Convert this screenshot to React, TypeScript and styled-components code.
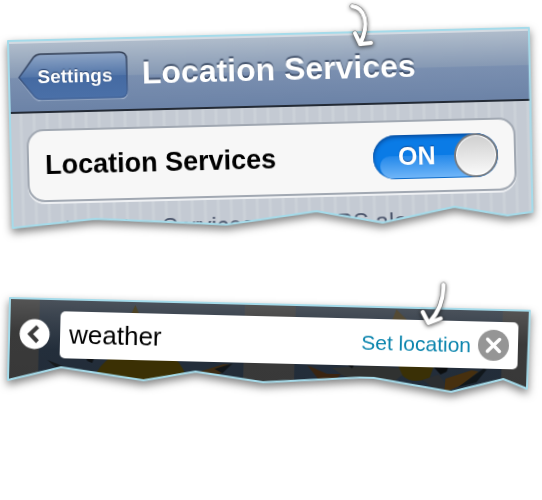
import React, { useState } from "react";
import styled, { createGlobalStyle } from "styled-components";

const GlobalStyle = createGlobalStyle`
  *, *::before, *::after { box-sizing: border-box; }
  body {
    margin: 0;
    background: #fff;
    font-family: "Liberation Sans", Arial, Helvetica, sans-serif;
  }
  button, input { font-family: inherit; }
`;

type Point = [number, number];

const SHEET_WIDTH = 522;

const settingsEdge: Point[] = [
  [0, 0], [521, 0], [520, 184], [495, 187], [442, 177], [370, 191],
  [304, 178], [214, 189], [83, 180], [0, 187],
];

const searchEdge: Point[] = [
  [0, 0], [522, 0], [521, 78], [497, 69], [445, 83], [367, 71], [353, 71],
  [256, 78], [188, 69], [136, 79], [53, 68], [0, 82],
];

const toPolygon = (points: Point[]) =>
  `polygon(${points.map(([x, y]) => `${(x / SHEET_WIDTH) * 100}% ${y}px`).join(", ")})`;

const Page = styled.main`
  display: flex;
  flex-direction: column;
  gap: 65px;
  min-height: 100vh;
  padding: 41px 12px 0 8px;
`;

const Snippet = styled.section<{ $angle: number; $inset: number }>`
  position: relative;
  margin-left: ${(p) => p.$inset}px;
  transform: rotate(${(p) => p.$angle}deg);
  transform-origin: 0 0;
`;

const Shadow = styled.div`
  position: relative;
  filter: drop-shadow(0 4px 4px rgba(0, 0, 0, 0.5));
`;

const Sheet = styled.div<{ $edge: Point[] }>`
  clip-path: ${(p) => toPolygon(p.$edge)};
`;

const EdgeSvg = styled.svg`
  position: absolute;
  inset: 0;
  width: 100%;
  height: 100%;
  overflow: visible;
  pointer-events: none;
`;

const ArrowSvg = styled.svg<{ $left: number }>`
  position: absolute;
  top: -30px;
  left: ${(p) => p.$left}%;
  overflow: visible;
  pointer-events: none;
  filter: drop-shadow(0 1px 2px rgba(0, 0, 0, 0.6));
`;

const SettingsScreen = styled.div`
  height: 192px;
  background: repeating-linear-gradient(
    90deg,
    #c4cad3 0 9px,
    #cbd1d8 10px 12px,
    #c4cad3 13px
  );
`;

const NavBar = styled.header`
  display: flex;
  align-items: center;
  gap: 14px;
  height: 73px;
  padding: 3px 9px 0;
  border-bottom: 2px solid #232a35;
  background: linear-gradient(#b3bfcd 0, #8699b4 52%, #7a8fb0 53%, #6c83a7 100%);
  box-shadow: inset 0 3px 0 #d3dae2;
`;

const BackButton = styled.button`
  position: relative;
  width: 110px;
  height: 48px;
  padding: 0 0 0 4px;
  border: 0;
  background: none;
  color: #fff;
  font-size: 19px;
  line-height: 48px;
  font-weight: 700;
  text-align: center;
  text-shadow: 0 -1px 1px #27406b;
  cursor: pointer;

  svg {
    position: absolute;
    inset: 0;
  }

  span {
    position: relative;
  }
`;

const Title = styled.h1`
  margin: 0;
  padding-bottom: 4px;
  color: #fff;
  font-size: 32px;
  line-height: 40px;
  font-weight: 700;
  white-space: nowrap;
  text-shadow: 0 -2px 1px rgba(45, 60, 85, 0.75);
`;

const SettingRow = styled.label`
  display: flex;
  align-items: center;
  justify-content: space-between;
  height: 73px;
  margin: 16px 17px 16px 16px;
  padding: 0 16px;
  border: 2px solid #a1a8b2;
  border-radius: 17px;
  background: #f7f7f7;
  box-shadow: 0 2px 0 #eef0f3;
  color: #000;
  font-size: 27px;
  font-weight: 700;
  white-space: nowrap;
  cursor: pointer;
`;

const Toggle = styled.span`
  position: relative;
  display: flex;
  align-items: center;
  justify-content: space-between;
  width: 125px;
  height: 44px;
  padding-left: 25px;
  border-radius: 22px;
  overflow: hidden;
  background: #0a7be6;
  box-shadow: inset 0 2px 4px #064a9c, inset 0 0 2px #2d5f9c;
  color: #fff;
  font-size: 25px;
  text-shadow: 0 -1px 1px #0b4c9b;

  &::before {
    content: "";
    position: absolute;
    left: 7px;
    right: 7px;
    top: 21px;
    bottom: 1px;
    border-radius: 14px 14px 18px 18px;
    background: linear-gradient(#2388ea, #6fb5f8);
  }

  span {
    position: relative;
  }
`;

const ToggleInput = styled.input`
  position: absolute;
  inset: 0;
  width: 100%;
  height: 100%;
  margin: 0;
  opacity: 0;
`;

const Knob = styled.i`
  position: relative;
  width: 44px;
  height: 44px;
  border: 2px solid #777b80;
  border-radius: 50%;
  background: linear-gradient(#cfcfcf, #fafafa);
  box-shadow: inset 0 0 0 1px #fff;
`;

const Hint = styled.p`
  margin: 0;
  padding-left: 52px;
  color: #4c566c;
  font-size: 24px;
  line-height: 24px;
  white-space: nowrap;
`;

const SearchScreen = styled.div`
  position: relative;
  height: 84px;
  background: #3a3a3a;
`;

const Backdrop = styled.svg`
  position: absolute;
  inset: 0;
  width: 100%;
  height: 100%;
`;

const SearchBar = styled.form`
  position: relative;
  display: flex;
  align-items: center;
  gap: 10px;
  padding: 12px 11px 0 10px;
`;

const RoundButton = styled.button`
  display: flex;
  flex: none;
  width: 31px;
  height: 31px;
  padding: 0;
  border: 0;
  border-radius: 50%;
  background: none;
  cursor: pointer;
`;

const SearchField = styled.div`
  display: flex;
  flex: 1;
  align-items: center;
  gap: 7px;
  min-width: 0;
  height: 47px;
  padding: 0 9px;
  border-radius: 5px;
  background: #fff;
`;

const SearchInput = styled.input`
  flex: 1;
  min-width: 0;
  height: 40px;
  padding: 0;
  border: 0;
  outline: 0;
  background: none;
  color: #000;
  font-size: 26px;
`;

const SetLocation = styled.button`
  padding: 0;
  border: 0;
  background: none;
  color: #0a84ad;
  font-size: 21px;
  line-height: 40px;
  white-space: nowrap;
  cursor: pointer;
`;

function TornEdge({ points, height }: { points: Point[]; height: number }) {
  return (
    <EdgeSvg viewBox={`0 0 ${SHEET_WIDTH} ${height}`} preserveAspectRatio="none" aria-hidden="true">
      <polygon
        points={points.map((p) => p.join(",")).join(" ")}
        fill="none"
        stroke="#a5dbea"
        strokeWidth="2"
        strokeLinejoin="round"
        vectorEffect="non-scaling-stroke"
      />
    </EdgeSvg>
  );
}

function Arrow({ left, shaft, head }: { left: number; shaft: string; head: string }) {
  return (
    <ArrowSvg $left={left} width="28" height="48" viewBox="0 0 28 48" aria-hidden="true">
      <g fill="none" stroke="#6d6d6d" strokeWidth="5" strokeLinecap="round" strokeLinejoin="round">
        <path d={shaft} />
        <path d={head} />
      </g>
      <g fill="none" stroke="#fff" strokeWidth="4" strokeLinecap="round" strokeLinejoin="round">
        <path d={shaft} />
        <path d={head} />
      </g>
    </ArrowSvg>
  );
}

function SearchBackdrop() {
  return (
    <Backdrop viewBox="0 0 522 84" preserveAspectRatio="none" aria-hidden="true">
      <defs>
        <linearGradient id="tile" x1="0" y1="0" x2="0" y2="1">
          <stop offset="0" stopColor="#4b525b" />
          <stop offset="0.2" stopColor="#3b444f" />
          <stop offset="0.6" stopColor="#232e3b" />
          <stop offset="1" stopColor="#222c38" />
        </linearGradient>
        <linearGradient id="gutter" x1="0" y1="0" x2="0" y2="1">
          <stop offset="0" stopColor="#555" />
          <stop offset="0.4" stopColor="#3a3a3a" />
          <stop offset="1" stopColor="#383838" />
        </linearGradient>
      </defs>
      <rect width="522" height="84" fill="url(#gutter)" />
      <rect x="30" width="206" height="84" fill="url(#tile)" />
      <rect x="287" width="208" height="84" fill="url(#tile)" />
      <path d="M126 4l4 9h-8z" fill="#4e4426" />
      <path d="M388 2l12 11h-16z" fill="#544a34" />
      <path d="M84 84q6-20 20-28h62q12 9 15 28z" fill="#3b3004" />
      <path d="M39 61l24 9-12 1z" fill="#171a1c" />
      <path d="M78 58l8 0-2 5-5-2z" fill="#101316" />
      <path d="M192 69l24-8 8 0-12 10-14 3z" fill="#3e2c14" />
      <path d="M207 66l18-6-10 10z" fill="#11161a" />
      <path d="M300 60l20 8 14 0-7 8-16-3z" fill="#3a2511" />
      <path d="M325 62l40-3 38 2-14 12-30 2-22-5z" fill="#303231" />
      <path d="M338 57h10l-3 5z" fill="#0c1013" />
      <path d="M391 58h36l-4 12q-18 7-27-2z" fill="#3a3006" />
      <path d="M425 57h17l-2 6-6 3z" fill="#0b0e10" />
      <path d="M416 72l16-6 14 18h-12z" fill="#2b2e31" />
      <path d="M438 84l1-14 26-9 7 1-15 13z" fill="#47300f" />
      <path d="M452 78l25-19 3 1-10 13z" fill="#11171b" />
    </Backdrop>
  );
}

export default function App() {
  const [enabled, setEnabled] = useState(true);
  const [query, setQuery] = useState("weather");

  return (
    <>
      <GlobalStyle />
      <Page>
        <Snippet $angle={-1.45} $inset={0}>
          <Shadow>
            <Sheet $edge={settingsEdge}>
              <SettingsScreen>
                <NavBar>
                  <BackButton type="button">
                    <svg width="110" height="48" viewBox="0 0 110 48" aria-hidden="true">
                      <defs>
                        <linearGradient id="back" x1="0" y1="0" x2="0" y2="1">
                          <stop offset="0" stopColor="#8ea5c6" />
                          <stop offset="0.5" stopColor="#5376a9" />
                          <stop offset="0.52" stopColor="#456aa2" />
                          <stop offset="1" stopColor="#4a70a8" />
                        </linearGradient>
                        <linearGradient id="backLine" x1="0" y1="0" x2="0" y2="1">
                          <stop offset="0" stopColor="#303c52" />
                          <stop offset="0.6" stopColor="#3c5580" />
                          <stop offset="1" stopColor="#45679c" />
                        </linearGradient>
                      </defs>
                      <path
                        d="M1 25L16 5q3-3 7-3h79q7 0 7 7v32q0 7-7 7H23q-4 0-7-3z"
                        fill="none"
                        stroke="#a9b9d1"
                        strokeWidth="1"
                      />
                      <path
                        d="M1 24L16 4q3-3 7-3h79q7 0 7 7v31q0 7-7 7H23q-4 0-7-3z"
                        fill="url(#back)"
                        stroke="url(#backLine)"
                        strokeWidth="1.5"
                      />
                    </svg>
                    <span>Settings</span>
                  </BackButton>
                  <Title>Location Services</Title>
                </NavBar>
                <SettingRow>
                  Location Services
                  <Toggle>
                    <ToggleInput
                      type="checkbox"
                      role="switch"
                      checked={enabled}
                      onChange={(e) => setEnabled(e.target.checked)}
                    />
                    <span>{enabled ? "ON" : "OFF"}</span>
                    <Knob />
                  </Toggle>
                </SettingRow>
                <Hint>Location Services uses GPS along</Hint>
              </SettingsScreen>
            </Sheet>
            <TornEdge points={settingsEdge} height={192} />
          </Shadow>
          <Arrow left={65.3} shaft="M4 4C17 6 21 22 11 42" head="M6 31L11 42L22 41" />
        </Snippet>

        <Snippet $angle={1.4} $inset={2}>
          <Shadow>
            <Sheet $edge={searchEdge}>
              <SearchScreen>
                <SearchBackdrop />
                <SearchBar onSubmit={(e) => e.preventDefault()}>
                  <RoundButton type="button" aria-label="Back">
                    <svg width="31" height="31" viewBox="0 0 31 31" aria-hidden="true">
                      <circle cx="15.5" cy="15.5" r="15" fill="#fff" />
                      <path d="M18.5 8L11 15.5L18.5 23" fill="none" stroke="#3b3b3b" strokeWidth="4" />
                    </svg>
                  </RoundButton>
                  <SearchField>
                    <SearchInput
                      aria-label="Search"
                      value={query}
                      onChange={(e) => setQuery(e.target.value)}
                    />
                    <SetLocation type="button">Set location</SetLocation>
                    <RoundButton type="button" aria-label="Clear" onClick={() => setQuery("")}>
                      <svg width="31" height="31" viewBox="0 0 31 31" aria-hidden="true">
                        <circle cx="15.5" cy="15.5" r="15.5" fill="#959595" />
                        <path
                          d="M9.5 9.5L21.5 21.5M21.5 9.5L9.5 21.5"
                          stroke="#fff"
                          strokeWidth="3.4"
                          strokeLinecap="round"
                        />
                      </svg>
                    </RoundButton>
                  </SearchField>
                </SearchBar>
              </SearchScreen>
            </Sheet>
            <TornEdge points={searchEdge} height={84} />
          </Shadow>
          <Arrow left={78.4} shaft="M25 6C26 20 21 33 12 44" head="M5 34L11 45L23 40" />
        </Snippet>
      </Page>
    </>
  );
}
